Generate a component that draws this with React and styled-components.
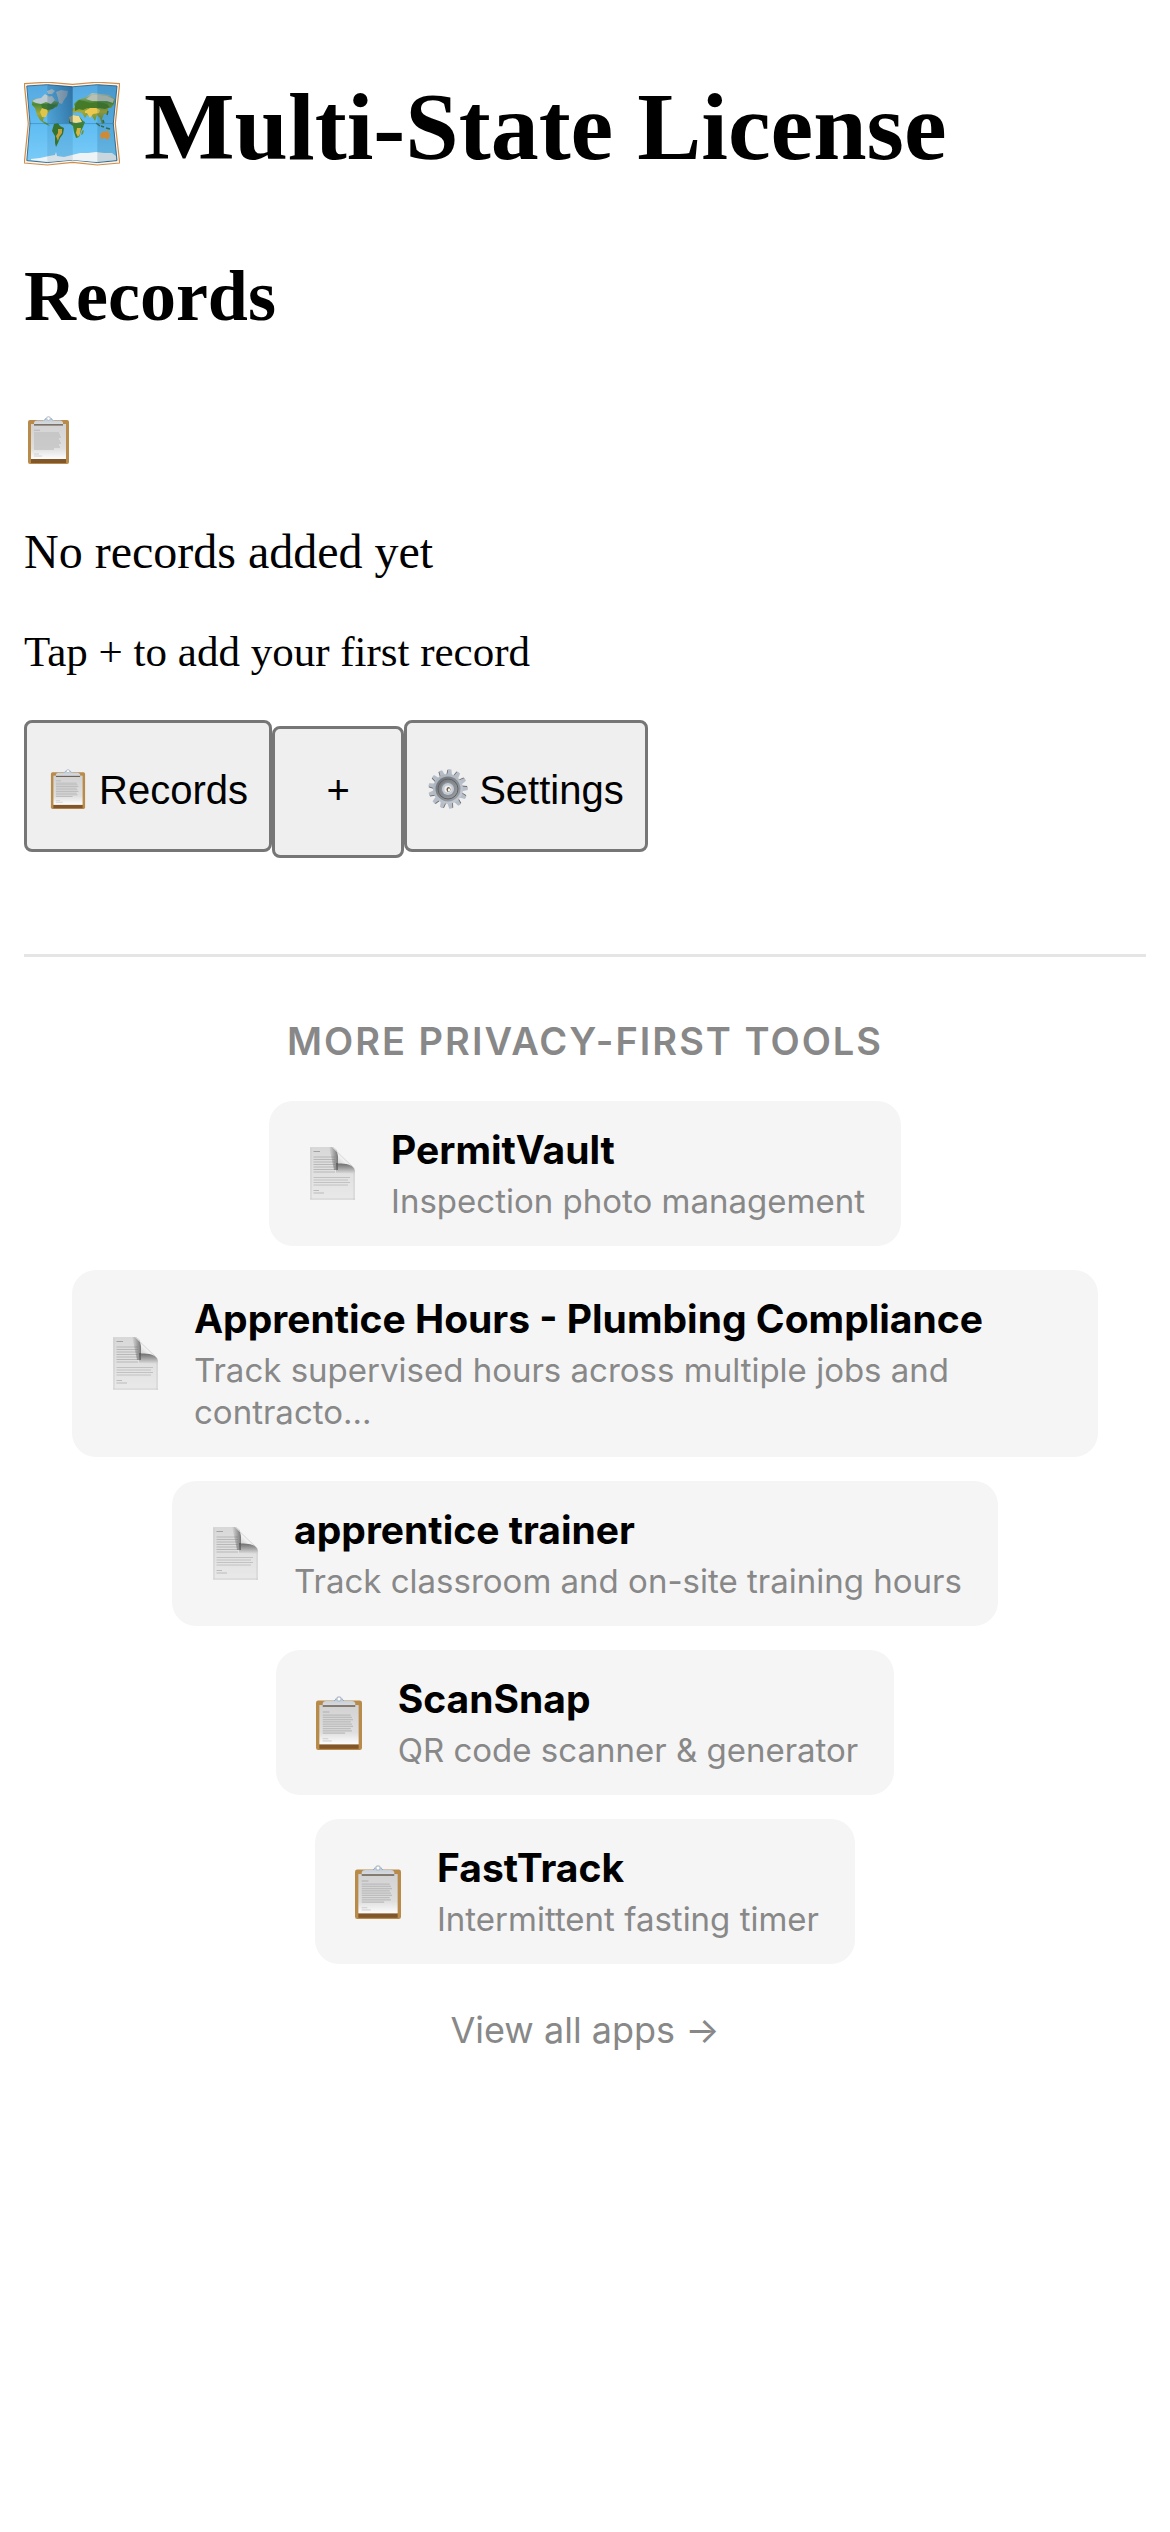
import React, { useId } from "react";
import styled, { createGlobalStyle } from "styled-components";

const apps = [
  {
    name: "PermitVault",
    text: "Inspection photo management",
    icon: "page",
  },
  {
    name: "Apprentice Hours - Plumbing Compliance",
    text: "Track supervised hours across multiple jobs and contracto...",
    icon: "page",
  },
  {
    name: "apprentice trainer",
    text: "Track classroom and on-site training hours",
    icon: "page",
  },
  {
    name: "ScanSnap",
    text: "QR code scanner & generator",
    icon: "clipboard",
  },
  {
    name: "FastTrack",
    text: "Intermittent fasting timer",
    icon: "clipboard",
  },
];

const MapIcon = () => {
  const id = useId();
  return (
    <svg width="96" height="90" viewBox="0 0 96 90" aria-hidden="true">
      <defs>
        <linearGradient id={`${id}sea`} x1="0" y1="0" x2="0" y2="1">
          <stop offset="0" stopColor="#55a9e0" />
          <stop offset="0.5" stopColor="#5fbcf2" />
          <stop offset="1" stopColor="#7accf8" />
        </linearGradient>
        <linearGradient id={`${id}fold`} x1="0" y1="0" x2="1" y2="0">
          <stop offset="0" stopColor="#0b3c66" stopOpacity="0.18" />
          <stop offset="1" stopColor="#0b3c66" stopOpacity="0.5" />
        </linearGradient>
        <linearGradient id={`${id}land`} x1="0" y1="0" x2="0" y2="1">
          <stop offset="0" stopColor="#b9c4bf" />
          <stop offset="0.3" stopColor="#4d8a35" />
          <stop offset="0.6" stopColor="#a5a93a" />
          <stop offset="1" stopColor="#4f8a30" />
        </linearGradient>
      </defs>
      <path
        d="M.3 1.6 23.3.2 48.7 2.3 73.3.2 95.7 1.6 91.3 41.6 95.7 81 73.3 83 48.7 80.3 23.3 83 .3 81 4.3 41.6Z"
        fill="#fbf5ec"
        stroke="#cf8d4c"
        strokeWidth="1.2"
      />
      <path
        d="M2.8 4 23.3 2.7 48.7 4.8 73.3 2.7 93 4 89.3 41.6 93 78.6 73.3 80.5 48.7 78 23.3 80.5 2.8 78.6 6 41.6Z"
        fill={`url(#${id}sea)`}
        stroke="#3f6f8e"
        strokeWidth="1"
      />
      <path
        d="M8 18l6-2 5 2 3-5 7 2 2 4 4 1-2 5-5 1-4 5-4 3-1 5 4 2 3 3-5-2-5-4-3-5-2-7-3-3Z"
        fill={`url(#${id}land)`}
      />
      <path d="M18 26l5 1 1 3-2 5-4 0-2-5Z" fill="#e0c548" />
      <path d="M17 22l9 0 7 1-4 4-5 1-6-2Z" fill="#3f7a35" />
      <path
        d="M8 19l4-2 5-1 4-4 4 3 3-1 3 4-4 4-5-2-5 2-5-1ZM23 9l5-2 3 2-3 3-4 0ZM32 10l5-2 7 1-1 5-3 4-2 4-3-1-1-5Z"
        fill="#bccbd2"
      />
      <path
        d="M30 42l4-1 2 3 4 2-1 6-3 4-2 5-2 4-1-4 0-7-3-5Z"
        fill="#3b7a2a"
      />
      <path d="M34 47l4 0 0 4-3 4-1 4-2-5 2-3Z" fill="#dcae3c" />
      <path
        d="M50 22l4-4 8-3 6-4 9 1 8 1 6 4-1 5-3 4-3 0 0 6-4 0-2 5 2 4-2 1-2-6-3-3-2 6-3-5-5-1-2 3-3-5-5-1-4 1-1-4 3-2Z"
        fill={`url(#${id}land)`}
      />
      <path
        d="M62 17l6-4 7 0 8 1 7 3-1 4-6-2-8 0-7 0Z"
        fill="#b8c0b3"
      />
      <path
        d="M51 23l4-5 5 1 6 2 9-1 8 2 3 3-5 2-6-1-7 1-5-1-4 2-4-1-4 2Z"
        fill="#447a28"
      />
      <path d="M61 29l5-3 6 0 4 2-1 3-6 1-3 4-3-5-2 0Z" fill="#ebc950" />
      <path
        d="M45 35l4-2 6 1 4 5 2 1-2 5-2 4-2 6-3 1-2-6-1-6-4-3Z"
        fill="#3f812c"
      />
      <path d="M45 35l4-2 6 1 3 6-6 1-6-1Z" fill="#f1dc8e" />
      <path d="M53 46l4 0-1 6-2 3-2-4Z" fill="#d9b545" />
      <path d="M58 49l2-1-1 4-2 1Z" fill="#69943c" />
      <path d="M76 52l4-3 2 1 2-2 2 6-2 4-3-2-4 1Z" fill="#f29a2e" />
      <path
        d="M72 41l4 3M77 44l3 1M82 46l4 1M79 38l1 3M84 29l-1 4"
        stroke="#3e7440"
        strokeWidth="1.4"
        fill="none"
      />
      <path
        d="M7 77l9-1 9-2 6-1 1-3 1 4 7 1 8-2 8-2 8 0 8-1 8 1 8 0 4 3 0 4-19 2-25-2-24 2-17-2Z"
        fill="#eef3f6"
      />
      <path d="M23.3 2.7 48.7 4.8V41.6H23.3Z" fill={`url(#${id}fold)`} />
      <path d="M23.3 41.6H48.7V78L23.3 80.5Z" fill="#0b3c66" opacity="0.1" />
      <path
        d="M73.3 2.7 93 4 89.3 41.6 93 78.6 73.3 80.5Z"
        fill="#0b3c66"
        opacity="0.16"
      />
      <path d="M5 41.6H90" stroke="#2f79a8" strokeWidth="0.5" />
    </svg>
  );
};

const ClipboardIcon = ({ width, height }) => {
  const id = useId();
  const lines = [17, 19, 21, 23, 25, 27, 29, 31, 33];
  return (
    <svg width={width} height={height} viewBox="0 0 41 48" aria-hidden="true">
      <defs>
        <linearGradient id={`${id}paper`} x1="0" y1="0" x2="0" y2="1">
          <stop offset="0" stopColor="#d2d2d2" />
          <stop offset="0.7" stopColor="#dfdfdf" />
          <stop offset="1" stopColor="#fdfdfd" />
        </linearGradient>
        <linearGradient id={`${id}metal`} x1="0" y1="0" x2="0" y2="1">
          <stop offset="0" stopColor="#c3cbd3" />
          <stop offset="1" stopColor="#d9dde2" />
        </linearGradient>
      </defs>
      <rect y="4" width="41" height="44" rx="2" fill="#b98b4b" />
      <rect x="3" y="43" width="35" height="4" fill="#80562a" />
      <rect x="3" y="8" width="35" height="35" fill={`url(#${id}paper)`} />
      <path d="M6 14.2H12" stroke="#b4b4b4" strokeWidth="1" />
      {lines.map((y, i) => (
        <path
          key={y}
          d={`M6 ${y}H${i === 8 ? 26 : 31 + (i % 3)}`}
          stroke="#bdbdbd"
          strokeWidth="1.2"
        />
      ))}
      <path d="M6 38H11M6 40H14" stroke="#c9c9c9" strokeWidth="0.8" />
      <path
        d="M6 9V6.5Q6.5 4.5 9 4.5H15Q17 4 17.5 2.5H23.5Q24 4 26 4.5H32Q34.5 4.5 35 6.5V9Z"
        fill={`url(#${id}metal)`}
      />
      <path
        d="M16 4.2Q18 3.6 18 2M25 4.2Q23 3.6 23 2"
        stroke="#7fa6cf"
        strokeWidth="0.8"
        fill="none"
      />
      <circle
        cx="20.5"
        cy="2.6"
        r="1.9"
        fill="#fff"
        stroke="#b5bec8"
        strokeWidth="1.1"
      />
      <rect x="6" y="8.2" width="29" height="1.3" fill="#67594b" />
    </svg>
  );
};

const PageIcon = () => {
  const id = useId();
  const lines = [10, 12.5, 15, 17.5, 20, 22.5, 25];
  const lower = [30.5, 33, 35.5, 38];
  return (
    <svg width="45" height="53" viewBox="0 0 45 53" aria-hidden="true">
      <defs>
        <linearGradient id={`${id}sheet`} x1="0" y1="0" x2="0" y2="1">
          <stop offset="0" stopColor="#d8d8d8" />
          <stop offset="1" stopColor="#e9e9e9" />
        </linearGradient>
        <linearGradient id={`${id}top`} x1="0" y1="0" x2="1" y2="0">
          <stop offset="0" stopColor="#666" stopOpacity="0" />
          <stop offset="1" stopColor="#666" stopOpacity="0.85" />
        </linearGradient>
        <linearGradient id={`${id}side`} x1="0" y1="0" x2="0" y2="1">
          <stop offset="0" stopColor="#5c5c5c" stopOpacity="0.9" />
          <stop offset="1" stopColor="#5c5c5c" stopOpacity="0" />
        </linearGradient>
        <linearGradient id={`${id}flap`} x1="0" y1="1" x2="1" y2="0">
          <stop offset="0.2" stopColor="#c8c8c8" />
          <stop offset="0.45" stopColor="#f2f2f2" />
          <stop offset="0.6" stopColor="#dedede" />
        </linearGradient>
      </defs>
      <path
        d="M0 0H22C26 1 28 5 28 10V17H37C42 18 45 21 45 25V53H0Z"
        fill={`url(#${id}sheet)`}
      />
      <path
        d="M1 1V52M0 52H45M44 26V53"
        stroke="#cbcbcb"
        strokeWidth="0.8"
      />
      <path d="M3.5 4.5H10" stroke="#9d9d9d" strokeWidth="0.9" />
      {lines.map((y) => (
        <path key={y} d={`M3.5 ${y}H25`} stroke="#b3b3b3" strokeWidth="0.9" />
      ))}
      {lower.map((y, i) => (
        <path
          key={y}
          d={`M3.5 ${y}H${40 - (i % 2) * 2}`}
          stroke="#bdbdbd"
          strokeWidth="0.9"
        />
      ))}
      <path d="M3.5 43.5H9M3.5 46H14" stroke="#b5b5b5" strokeWidth="0.9" />
      <path d="M19 0H22C26 1 28 5 28 10V23H24Z" fill={`url(#${id}top)`} />
      <path
        d="M26 16H37C42 18 45 21 45 25V27L26 26Z"
        fill={`url(#${id}side)`}
      />
      <path
        d="M22 0L44.500 21.500C41 17.500 37 16.500 28 16.500V10C28 5 26 1 22 0Z"
        fill={`url(#${id}flap)`}
      />
      <path d="M22 0L44.500 21.500" stroke="#cfcfcf" strokeWidth="0.7" />
    </svg>
  );
};

const GearIcon = () => {
  const id = useId();
  const teeth = Array.from({ length: 13 }, (_, i) => (i * 360) / 13 + 6);
  return (
    <svg width="40" height="40" viewBox="0 0 40 40" aria-hidden="true">
      <defs>
        <linearGradient id={`${id}rim`} x1="0" y1="0" x2="1" y2="1">
          <stop offset="0" stopColor="#a6afb8" />
          <stop offset="1" stopColor="#c6ccd6" />
        </linearGradient>
        <linearGradient id={`${id}dish`} x1="0" y1="0" x2="1" y2="1">
          <stop offset="0" stopColor="#6a6e72" />
          <stop offset="1" stopColor="#a2a7ad" />
        </linearGradient>
      </defs>
      {teeth.map((angle) => (
        <g key={angle} transform={`rotate(${angle} 20 20)`}>
          <path d="M16.8 7 17.4.8H20.5L22 7Z" fill="#66605c" />
          <path d="M17.5 7 18.2.3H21.4L22.7 7Z" fill="#b5bdc8" />
        </g>
      ))}
      <circle cx="20" cy="20" r="15" fill={`url(#${id}rim)`} />
      <circle cx="20" cy="20" r="12.5" fill={`url(#${id}dish)`} />
      <circle
        cx="20"
        cy="20"
        r="10"
        fill="none"
        stroke="#5e6266"
        strokeWidth="1"
      />
      <circle cx="20" cy="20" r="7.5" fill="#8b9096" />
      <circle cx="20" cy="20" r="6" fill="#c5cbd2" />
      <circle cx="20" cy="20" r="3.6" fill="#eef1f3" />
      <ellipse cx="20.5" cy="20.5" rx="2" ry="2.6" fill="#6d5b4b" />
      <ellipse cx="21" cy="21" rx="1.2" ry="1.7" fill="#f4f4f4" />
    </svg>
  );
};

const App = () => {
  return (
    <>
      <GlobalStyle />
      <Page>
        <Title>
          <MapIcon />
          Multi-State License
        </Title>
        <section>
          <Heading>Records</Heading>
          <EmptyIcon>
            <ClipboardIcon width="41" height="48" />
          </EmptyIcon>
          <EmptyText>No records added yet</EmptyText>
          <EmptyHint>Tap + to add your first record</EmptyHint>
        </section>
        <Nav>
          <NavButton type="button" $icon>
            <ClipboardIcon width="40" height="40" /> Records
          </NavButton>
          <NavButton type="button">+</NavButton>
          <NavButton type="button" $icon>
            <GearIcon /> Settings
          </NavButton>
        </Nav>
        <More>
          <MoreTitle>More privacy-first tools</MoreTitle>
          <AppList>
            {apps.map((app) => (
              <AppCard href="#" key={app.name}>
                <AppIcon>
                  {app.icon === "page" ? (
                    <PageIcon />
                  ) : (
                    <ClipboardIcon width="46" height="54" />
                  )}
                </AppIcon>
                <AppContent>
                  <AppName>{app.name}</AppName>
                  <AppText>{app.text}</AppText>
                </AppContent>
              </AppCard>
            ))}
          </AppList>
          <ViewAll href="#">View all apps →</ViewAll>
        </More>
      </Page>
    </>
  );
};

export default App;

const GlobalStyle = createGlobalStyle`
  * {
    box-sizing: border-box;
  }
  body {
    margin: 0;
    background-color: #fff;
    color: #000;
    font-family: "Liberation Serif", "Times New Roman", serif;
  }
  svg {
    flex-shrink: 0;
  }
`;

const Page = styled.main`
  padding: 64px 24px;
`;

const Title = styled.h1`
  display: flex;
  align-items: center;
  gap: 24px;
  margin: 0 0 64px;
  font-size: 96px;
  font-weight: 700;
  line-height: 126px;
`;

const Heading = styled.h2`
  margin: 0 0 66px;
  font-size: 72px;
  font-weight: 700;
  line-height: 84px;
`;

const EmptyIcon = styled.div`
  display: flex;
  align-items: center;
  height: 72px;
  margin-bottom: 48px;
  padding-left: 4px;
`;

const EmptyText = styled.p`
  margin: 0 0 48px;
  font-size: 48px;
  line-height: 56px;
`;

const EmptyHint = styled.p`
  margin: 0 0 44px;
  font-size: 43px;
  line-height: 48px;
`;

const Nav = styled.nav`
  display: flex;
  align-items: baseline;
`;

const NavButton = styled.button`
  min-width: 132px;
  height: 132px;
  padding: ${(props) => (props.$icon ? "12px 21px 4px" : "0 21px 4px")};
  border: 3px solid #767676;
  border-radius: 8px;
  background-color: #efefef;
  color: #000;
  font-family: "Liberation Sans", Arial, sans-serif;
  font-size: 40px;
  line-height: 46px;
  white-space: nowrap;

  svg {
    vertical-align: -5px;
  }
`;

const More = styled.footer`
  display: flex;
  flex-direction: column;
  align-items: center;
  margin-top: 96px;
  padding: 60px 48px;
  border-top: 3px solid #e5e5e5;
  font-family: Inter, sans-serif;
`;

const MoreTitle = styled.h3`
  margin: 0 0 36px;
  color: #888;
  font-size: 38px;
  font-weight: 600;
  line-height: 48px;
  letter-spacing: 2px;
  text-transform: uppercase;
`;

const AppList = styled.div`
  display: flex;
  flex-direction: column;
  align-items: center;
  gap: 24px;
  margin-bottom: 44px;
`;

const AppCard = styled.a`
  display: flex;
  align-items: center;
  gap: 32px;
  padding: 24px 36px;
  border-radius: 24px;
  background-color: #f5f5f5;
  color: #000;
  text-decoration: none;
`;

const AppIcon = styled.span`
  display: flex;
  justify-content: center;
  flex-shrink: 0;
  width: 54px;
`;

const AppContent = styled.span`
  display: flex;
  flex-direction: column;
  gap: 6px;
`;

const AppName = styled.span`
  font-size: 39px;
  font-weight: 700;
  line-height: 49px;
`;

const AppText = styled.span`
  color: #888;
  font-size: 33px;
  line-height: 42px;
`;

const ViewAll = styled.a`
  color: #888;
  font-size: 36px;
  line-height: 44px;
  text-decoration: none;
`;
